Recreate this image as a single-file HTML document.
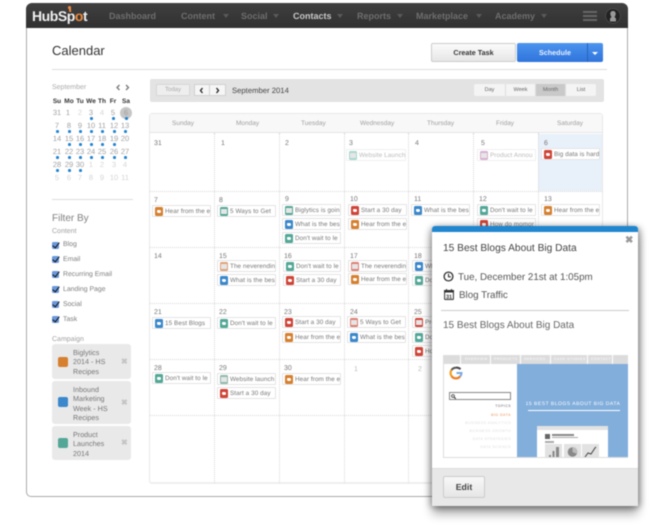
<!DOCTYPE html>
<html><head><meta charset="utf-8">
<style>
*{box-sizing:border-box}
html,body{margin:0;padding:0;width:650px;height:525px;overflow:hidden;background:#fff;font-family:"Liberation Sans",sans-serif;text-rendering:geometricPrecision}
#r{position:absolute;left:0;top:0;width:650px;height:525px;overflow:hidden;filter:blur(.5px)}
.a,.n,.c,.m,.d,.e,.t{position:absolute;white-space:nowrap}
.n{top:11px;font-size:9px;font-weight:bold;color:#6e6e6e;line-height:11px}
.c{top:14px;width:0;height:0;border:3.5px solid transparent;border-top:4px solid #5a5a5a;border-bottom:0}
.m{width:12px;text-align:center;font-size:7.5px;line-height:9px;color:#a0a0a0;margin-left:-6px}
.h{color:#333;font-weight:bold;font-size:6.5px}
.f{color:#d4d4d4}
.m.b::after{content:"";position:absolute;left:5px;top:9px;width:2.5px;height:2.5px;border-radius:50%;background:#1f83d0}
.d{font-size:7px;line-height:9px;color:#777}
.l{position:absolute;left:150px;width:453px;height:0;border-top:1px dotted #d8d8d8}
.v{position:absolute;top:133px;height:350px;width:0;border-left:1px dotted #d8d8d8}
.e{height:12px;border:1px solid #e4e4e4;background:#fff;font-size:6.3px;line-height:11px;color:#777;padding-left:12px;overflow:hidden;letter-spacing:.1px;border-radius:1px}
.e i{position:absolute;left:1.5px;top:1px;width:8.5px;height:8.5px;border-radius:1.5px;background:var(--k)}
.e i::after{content:"";position:absolute;left:2.5px;top:2.5px;width:3.5px;height:3.5px;background:#fff;border-radius:1px 2px 2px 2px}
.e i.g::after{left:1px;top:1.5px;width:6.5px;height:5px;border-radius:0;background:#e6e6e6}
.O{--k:#d67f2e}.B{--k:#3a87cb}.T{--k:#52a797}.R{--k:#cf4436}.S{--k:#dd7f72}.Y{--k:#dda37a}.P{--k:#d8b0d2}.Q{--k:#a8d8ce}
.ck{position:absolute;left:52px;width:7px;height:7px;background:#6a98dc;border-radius:1.5px}
.ck::after{content:"";position:absolute;left:1.5px;top:-1px;width:3px;height:6px;border:solid #111;border-width:0 1.5px 1.5px 0;transform:rotate(38deg)}
.cl{position:absolute;left:63px;font-size:6.9px;line-height:9px;color:#808080}
.cp{position:absolute;left:52px;width:79px;background:#e9e9e9;border-radius:3px;font-size:7.2px;line-height:9.3px;color:#777;padding:4px 0 0 21px}
.cp b{position:absolute;left:5.5px;width:10px;height:10px;border-radius:2px}
.cp u{position:absolute;left:69px;top:50%;margin-top:-5px;font-size:8px;line-height:10px;color:#c4c4c4;text-decoration:none;font-weight:bold}
.w{position:absolute;top:84px;height:12px;font-size:5.5px;line-height:12px;text-align:center;color:#666;background:#f4f4f4;border-right:1px solid #ddd}
.t{color:#fff}
</style></head><body><div id="r">

<!-- frame -->
<div class="a" style="left:26px;top:3px;width:602px;height:494px;border:1px solid #aaa;border-radius:7px 7px 5px 5px;background:#fff"></div>
<div class="a" style="left:26px;top:3px;width:602px;height:25px;background:linear-gradient(#404040,#303030);border-radius:6px 6px 0 0"></div>

<div class="a" style="left:32px;top:7px;font-size:14px;line-height:18px;font-weight:bold;color:#f0f0f0;letter-spacing:-.45px">HubSp<span style="color:#f08a3c">o</span>t</div>
<div class="a" style="left:69px;top:7px;width:1.500px;height:5px;background:#f08a3c;transform:rotate(-5deg)"></div>
<div class="a" style="left:67.500px;top:6px;width:3.500px;height:3px;border-radius:50%;background:#f08a3c"></div>
<div class="n" style="left:109px">Dashboard</div>
<div class="n" style="left:181px">Content</div><div class="c" style="left:223px"></div>
<div class="n" style="left:241px">Social</div><div class="c" style="left:273px"></div>
<div class="n" style="left:293px;color:#c9c9c9">Contacts</div><div class="c" style="left:337px"></div>
<div class="n" style="left:357px">Reports</div><div class="c" style="left:397px"></div>
<div class="n" style="left:416px">Marketplace</div><div class="c" style="left:476px"></div>
<div class="n" style="left:495px">Academy</div><div class="c" style="left:541px"></div>
<div class="a" style="left:583px;top:11px;width:14px;height:2px;background:#666"></div>
<div class="a" style="left:583px;top:15px;width:14px;height:2px;background:#666"></div>
<div class="a" style="left:583px;top:19px;width:14px;height:2px;background:#666"></div>
<svg class="a" style="left:605px;top:8px" width="16" height="16" viewBox="0 0 16 16"><circle cx="8" cy="8" r="7.3" fill="#222" stroke="#555" stroke-width=".6"/><path d="M5 13.500V11c0-1 1-1.300 1.500-2C5.800 8 5.300 7 5.300 5.800 5.300 4 6.400 3 8 3s2.700 1 2.700 2.800C10.700 7 10.200 8 9.500 9c.5.700 1.500 1 1.500 2v2.500z" fill="#999"/></svg>

<!-- page head -->
<div class="a" style="left:52px;top:42px;font-size:13px;line-height:18px;color:#333">Calendar</div>
<div class="a" style="left:52px;top:69px;width:555px;height:1px;background:#ddd"></div>
<div class="a" style="left:431px;top:43px;width:85px;height:19px;background:linear-gradient(#fbfbfb,#e6e6e6);border:1px solid #ccc;border-radius:2px;font-size:7.2px;font-weight:bold;line-height:17px;text-align:center;color:#333">Create Task</div>
<div class="a" style="left:517px;top:43px;width:86px;height:19px;background:linear-gradient(#4c94ee,#2f74dc);border-radius:2px;font-size:7.2px;font-weight:bold;line-height:19px;color:#e8f0ff;padding-left:22px">Schedule</div>
<div class="a" style="left:587px;top:43px;width:1px;height:19px;background:#2a62b8"></div>
<div class="a" style="left:592px;top:52px;width:0;height:0;border:3px solid transparent;border-top:3.500px solid #fff;border-bottom:0"></div>

<!-- mini calendar -->
<div class="a" style="left:52px;top:83px;font-size:7px;line-height:9px;color:#aaa">September</div>
<svg class="a" style="left:116px;top:84px" width="14" height="7" viewBox="0 0 14 7"><path d="M3.500 1L1 3.500 3.500 6M10 1l2.500 2.500L10 6" fill="none" stroke="#777" stroke-width="1.300"/></svg>
<div class="a" style="left:120px;top:107px;width:12px;height:12px;border-radius:50%;background:#c6c6c6"></div>
<div class="m h" style="left:57px;top:97px">Su</div><div class="m h" style="left:69px;top:97px">Mo</div><div class="m h" style="left:80px;top:97px">Tu</div><div class="m h" style="left:91px;top:97px">We</div><div class="m h" style="left:102px;top:97px">Th</div><div class="m h" style="left:113px;top:97px">Fr</div><div class="m h" style="left:126px;top:97px">Sa</div>

<div class="m" style="left:57px;top:108px">31</div><div class="m" style="left:68px;top:108px">1</div><div class="m f" style="left:80px;top:108px">2</div><div class="m b" style="left:91px;top:108px">3</div><div class="m f" style="left:102px;top:108px">4</div><div class="m b" style="left:113px;top:108px">5</div><div class="m b" style="left:126px;top:108px">6</div>
<div class="m b" style="left:57px;top:121px">7</div><div class="m b" style="left:69px;top:121px">8</div><div class="m b" style="left:80px;top:121px">9</div><div class="m b" style="left:91px;top:121px">10</div><div class="m b" style="left:102px;top:121px">11</div><div class="m b" style="left:114px;top:121px">12</div><div class="m b" style="left:125px;top:121px">13</div>
<div class="m" style="left:57px;top:134px">14</div><div class="m b" style="left:69px;top:134px">15</div><div class="m b" style="left:80px;top:134px">16</div><div class="m b" style="left:91px;top:134px">17</div><div class="m b" style="left:102px;top:134px">18</div><div class="m b" style="left:114px;top:134px">19</div><div class="m" style="left:125px;top:134px">20</div>
<div class="m b" style="left:57px;top:147px">21</div><div class="m b" style="left:69px;top:147px">22</div><div class="m b" style="left:80px;top:147px">23</div><div class="m b" style="left:91px;top:147px">24</div><div class="m b" style="left:102px;top:147px">25</div><div class="m b" style="left:114px;top:147px">26</div><div class="m b" style="left:125px;top:147px">27</div>
<div class="m b" style="left:57px;top:160px">28</div><div class="m b" style="left:69px;top:160px">29</div><div class="m b" style="left:80px;top:160px">30</div><div class="m f" style="left:91px;top:160px">1</div><div class="m f" style="left:102px;top:160px">2</div><div class="m f" style="left:114px;top:160px">3</div><div class="m f" style="left:125px;top:160px">4</div>
<div class="m f" style="left:57px;top:173px">5</div><div class="m f" style="left:69px;top:173px">6</div><div class="m f" style="left:80px;top:173px">7</div><div class="m f" style="left:91px;top:173px">8</div><div class="m f" style="left:102px;top:173px">9</div><div class="m f" style="left:114px;top:173px">10</div><div class="m f" style="left:125px;top:173px">11</div>

<div class="a" style="left:52px;top:199px;width:81px;height:1px;background:#ddd"></div>

<!-- filters -->
<div class="a" style="left:52px;top:212px;font-size:10px;line-height:13px;color:#808080">Filter By</div>
<div class="a" style="left:52px;top:227px;font-size:7px;line-height:9px;color:#a0a0a0">Content</div>
<div class="ck" style="top:241.500px"></div><div class="cl" style="top:240px">Blog</div>
<div class="ck" style="top:256px"></div><div class="cl" style="top:255px">Email</div>
<div class="ck" style="top:271px"></div><div class="cl" style="top:270px">Recurring Email</div>
<div class="ck" style="top:286px"></div><div class="cl" style="top:285px">Landing Page</div>
<div class="ck" style="top:301px"></div><div class="cl" style="top:300px">Social</div>
<div class="ck" style="top:316px"></div><div class="cl" style="top:315px">Task</div>
<div class="a" style="left:52px;top:335px;font-size:7px;line-height:9px;color:#a0a0a0">Campaign</div>
<div class="cp" style="top:344px;height:35px"><b style="top:12.500px;background:#d67f2e"></b>Biglytics<br>2014 - HS<br>Recipes<u>✖</u></div>
<div class="cp" style="top:381px;height:43px"><b style="top:16px;background:#3a87cb"></b>Inbound<br>Marketing<br>Week - HS<br>Recipes<u>✖</u></div>
<div class="cp" style="top:426px;height:34px"><b style="top:12px;background:#52a797"></b>Product<br>Launches<br>2014<u>✖</u></div>

<!-- toolbar -->
<div class="a" style="left:150px;top:79px;width:454px;height:23px;background:#e3e3e3;border-radius:2px"></div>
<div class="a" style="left:156px;top:84px;width:34px;height:12px;background:#eee;border:1px solid #d8d8d8;font-size:6px;line-height:11px;text-align:center;color:#aaa">Today</div>
<div class="a" style="left:194px;top:84px;width:32px;height:12px;background:#f6f6f6;border:1px solid #d0d0d0"></div>
<div class="a" style="left:209px;top:84px;width:1px;height:12px;background:#d0d0d0"></div>
<svg class="a" style="left:199px;top:87px" width="22" height="7" viewBox="0 0 22 7"><path d="M3.500 1L1.500 3.500 3.500 6M17.500 1l2 2.500-2 2.500" fill="none" stroke="#222" stroke-width="1.300"/></svg>
<div class="a" style="left:232px;top:85px;font-size:7.700px;line-height:11px;color:#444">September 2014</div>
<div class="w" style="left:474px;width:32px;border-radius:2px 0 0 2px">Day</div>
<div class="w" style="left:506px;width:30px">Week</div>
<div class="w" style="left:536px;width:30px;background:#c9c9c9">Month</div>
<div class="w" style="left:566px;width:30px;border-radius:0 2px 2px 0;border-right:0">List</div>

<!-- calendar grid -->
<div class="a" style="left:149px;top:113px;width:454px;height:371px;border:1px solid #e8e8e8;border-bottom:2px solid #eee;border-radius:3px"></div>
<div class="a" style="left:150px;top:114px;width:452px;height:19px;background:#f8f8f8;border-bottom:1px solid #e4e4e4"></div>
<div class="a" style="left:538px;top:134px;width:64px;height:57px;background:#e8f0fa"></div>

<div class="a" style="left:172px;top:119px;font-size:6.5px;line-height:9px;color:#a0a0a0">Sunday</div>
<div class="a" style="left:236px;top:119px;font-size:6.5px;line-height:9px;color:#a0a0a0">Monday</div>
<div class="a" style="left:301px;top:119px;font-size:6.5px;line-height:9px;color:#a0a0a0">Tuesday</div>
<div class="a" style="left:360px;top:119px;font-size:6.5px;line-height:9px;color:#a0a0a0">Wednesday</div>
<div class="a" style="left:427px;top:119px;font-size:6.5px;line-height:9px;color:#a0a0a0">Thursday</div>
<div class="a" style="left:496px;top:119px;font-size:6.5px;line-height:9px;color:#a0a0a0">Friday</div>
<div class="a" style="left:557px;top:119px;font-size:6.5px;line-height:9px;color:#a0a0a0">Saturday</div>

<div class="v" style="left:214px"></div><div class="v" style="left:279px"></div><div class="v" style="left:344px"></div><div class="v" style="left:408px"></div><div class="v" style="left:473px"></div><div class="v" style="left:538px"></div>
<div class="l" style="top:191px"></div><div class="l" style="top:247px"></div><div class="l" style="top:303px"></div><div class="l" style="top:359px"></div><div class="l" style="top:415px"></div>

<div class="d" style="left:154px;top:139px">31</div><div class="d" style="left:221px;top:139px">1</div><div class="d" style="left:285px;top:139px">2</div><div class="d" style="left:349px;top:139px">3</div><div class="d" style="left:415px;top:139px">4</div><div class="d" style="left:481px;top:139px">5</div><div class="d" style="left:544px;top:139px">6</div>
<div class="d" style="left:154px;top:196px">7</div><div class="d" style="left:219px;top:196px">8</div><div class="d" style="left:285px;top:195px">9</div><div class="d" style="left:350px;top:195px">10</div><div class="d" style="left:414px;top:195px">11</div><div class="d" style="left:479px;top:195px">12</div><div class="d" style="left:544px;top:195px">13</div>
<div class="d" style="left:154px;top:252px">14</div><div class="d" style="left:219px;top:252px">15</div><div class="d" style="left:284px;top:252px">16</div><div class="d" style="left:350px;top:252px">17</div><div class="d" style="left:414px;top:252px">18</div>
<div class="d" style="left:154px;top:308px">21</div><div class="d" style="left:219px;top:308px">22</div><div class="d" style="left:284px;top:308px">23</div><div class="d" style="left:350px;top:308px">24</div><div class="d" style="left:414px;top:308px">25</div>
<div class="d" style="left:154px;top:364px">28</div><div class="d" style="left:219px;top:364px">29</div><div class="d" style="left:284px;top:364px">30</div><div class="d" style="left:354px;top:365px;color:#bbb">1</div><div class="d" style="left:418px;top:365px;color:#bbb">2</div>

<!-- events -->
<div class="e Q" style="left:346px;top:149px;width:60px;color:#bbb;border-color:#f0f0f0"><i class="g"></i>Website Launch</div>
<div class="e P" style="left:477px;top:149px;width:59px;color:#bbb;border-color:#f0f0f0"><i class="g"></i>Product Annou</div>
<div class="e R" style="left:541px;top:148px;width:59px"><i></i>Big data is hard</div>

<div class="e O" style="left:152px;top:205px;width:59px"><i></i>Hear from the e</div>
<div class="e T" style="left:217px;top:205px;width:59px"><i class="g"></i>5 Ways to Get</div>
<div class="e T" style="left:282px;top:204px;width:59px"><i class="g"></i>Biglytics is goin</div>
<div class="e B" style="left:282px;top:218px;width:59px"><i></i>What is the bes</div>
<div class="e T" style="left:282px;top:232px;width:59px"><i></i>Don't wait to le</div>
<div class="e R" style="left:348px;top:204px;width:59px"><i></i>Start a 30 day</div>
<div class="e O" style="left:348px;top:218px;width:59px"><i></i>Hear from the e</div>
<div class="e B" style="left:411px;top:204px;width:59px"><i></i>What is the bes</div>
<div class="e T" style="left:477px;top:204px;width:59px"><i></i>Don't wait to le</div>
<div class="e R" style="left:477px;top:218px;width:59px"><i></i>How do momor</div>
<div class="e O" style="left:541px;top:204px;width:59px"><i></i>Hear from the e</div>

<div class="e Y" style="left:217px;top:260px;width:59px"><i class="g"></i>The neverendin</div>
<div class="e B" style="left:217px;top:274px;width:59px"><i></i>What is the bes</div>
<div class="e T" style="left:283px;top:260px;width:58px"><i></i>Don't wait to le</div>
<div class="e R" style="left:283px;top:274px;width:58px"><i></i>Start a 30 day</div>
<div class="e S" style="left:348px;top:260px;width:59px"><i class="g"></i>The neverendin</div>
<div class="e O" style="left:348px;top:273px;width:59px"><i></i>Hear from the e</div>
<div class="e B" style="left:412px;top:260px;width:59px"><i></i>What is the bes</div>
<div class="e T" style="left:412px;top:274px;width:59px"><i></i>Don't wait to le</div>

<div class="e B" style="left:152px;top:317px;width:59px"><i></i>15 Best Blogs</div>
<div class="e T" style="left:217px;top:317px;width:59px"><i></i>Don't wait to le</div>
<div class="e R" style="left:282px;top:316px;width:59px"><i></i>Start a 30 day</div>
<div class="e O" style="left:282px;top:331px;width:59px"><i></i>Hear from the e</div>
<div class="e S" style="left:347px;top:316px;width:59px"><i class="g"></i>5 Ways to Get</div>
<div class="e B" style="left:347px;top:331px;width:59px"><i></i>What is the bes</div>
<div class="e R" style="left:412px;top:316px;width:59px"><i class="g"></i>Product Annou</div>
<div class="e T" style="left:412px;top:331px;width:59px"><i></i>Don't wait to le</div>
<div class="e R" style="left:412px;top:345px;width:59px"><i></i>How do momor</div>

<div class="e T" style="left:152px;top:372px;width:59px"><i></i>Don't wait to le</div>
<div class="e T" style="left:217px;top:373px;width:59px;--k:#8fb8ae"><i class="g"></i>Website launch</div>
<div class="e R" style="left:217px;top:387px;width:59px"><i></i>Start a 30 day</div>
<div class="e O" style="left:282px;top:373px;width:59px"><i></i>Hear from the e</div>

<!-- popup -->
<div class="a" style="left:432px;top:226px;width:206px;height:280px;background:#fff;border-radius:3px 3px 2px 2px;box-shadow:0 8px 10px 0 rgba(0,0,0,.32),-2px 1px 7px rgba(0,0,0,.28),3px 1px 7px rgba(0,0,0,.28);z-index:5">
 <div class="a" style="left:0;top:0;width:206px;height:6px;background:#1f86cf;border-radius:3px 3px 0 0"></div>
 <div class="a" style="left:11px;top:16px;font-size:10.2px;line-height:14px;color:#444">15 Best Blogs About Big Data</div>
 <div class="a" style="left:193px;top:9px;font-size:10px;line-height:12px;color:#999;font-weight:bold">✖</div>
 <svg class="a" style="left:11px;top:45px" width="11" height="11" viewBox="0 0 11 11"><circle cx="5.500" cy="5.500" r="4.400" fill="none" stroke="#333" stroke-width="1.300"/><path d="M5.500 2.800v3h2.400" fill="none" stroke="#333" stroke-width="1.100"/></svg>
 <div class="a" style="left:26px;top:45px;font-size:9.800px;line-height:14px;color:#555">Tue, December 21st at 1:05pm</div>
 <svg class="a" style="left:12px;top:63px" width="10" height="11" viewBox="0 0 10 11"><rect x=".6" y="1.500" width="8.800" height="9" rx=".8" fill="#fff" stroke="#333" stroke-width="1"/><rect x="0" y="1" width="10" height="2.500" fill="#333"/><path d="M2.500 0v2M7.500 0v2" stroke="#333"/><text x="5" y="9.300" font-size="5.500" font-weight="bold" font-family="Liberation Sans" text-anchor="middle" fill="#333">31</text></svg>
 <div class="a" style="left:27px;top:63px;font-size:9.800px;line-height:14px;color:#555">Blog Traffic</div>
 <div class="a" style="left:9px;top:84px;width:188px;height:1px;background:#ccc"></div>
 <div class="a" style="left:11px;top:93px;font-size:10px;line-height:14px;color:#666">15 Best Blogs About Big Data</div>

 <!-- thumbnail -->
 <div class="a" style="left:11px;top:129px;width:185px;height:103px;background:#fff;overflow:hidden;border-left:1px solid #ddd;border-bottom:1px solid #ddd">
  <div class="a" style="left:0;top:0;width:185px;height:9px;background:#dcdcdc"></div>
  <div class="a" style="left:16px;top:0;width:1px;height:9px;background:#fff"></div><div class="a" style="left:46px;top:0;width:1px;height:9px;background:#fff"></div><div class="a" style="left:76px;top:0;width:1px;height:9px;background:#fff"></div><div class="a" style="left:106px;top:0;width:1px;height:9px;background:#fff"></div><div class="a" style="left:143px;top:0;width:1px;height:9px;background:#fff"></div><div class="a" style="left:168px;top:0;width:1px;height:9px;background:#fff"></div>
  <div class="t" style="left:21px;top:2px;font-size:3.500px;line-height:5px;letter-spacing:.5px">OVERVIEW</div>
  <div class="t" style="left:50px;top:2px;font-size:3.500px;line-height:5px;letter-spacing:.5px">PRODUCTS</div>
  <div class="t" style="left:80px;top:2px;font-size:3.500px;line-height:5px;letter-spacing:.5px">SERVICES</div>
  <div class="t" style="left:110px;top:2px;font-size:3.500px;line-height:5px;letter-spacing:.5px">CASE STUDIES</div>
  <div class="t" style="left:147px;top:2px;font-size:3.500px;line-height:5px;letter-spacing:.5px">CONTACT</div>
  <div class="a" style="left:73px;top:9px;width:112px;height:94px;background:#82aedc"></div>
  <svg class="a" style="left:5px;top:11px" width="14" height="14" viewBox="0 0 14 14"><path d="M11.500 3.200A5.300 5.300 0 0 0 7 1.700" fill="none" stroke="#444" stroke-width="2"/><path d="M7 1.700A5.300 5.300 0 0 0 2.500 4" fill="none" stroke="#555" stroke-width="2"/><path d="M2.500 4A5.500 5.500 0 0 0 2.500 10" fill="none" stroke="#f0a020" stroke-width="2.200"/><path d="M2.500 10A5.300 5.300 0 0 0 11 10.500" fill="none" stroke="#ef7d22" stroke-width="2.200"/><path d="M11 10.500A5 5 0 0 0 12.500 7H7.500" fill="none" stroke="#7ba8e0" stroke-width="2"/></svg>
  <div class="a" style="left:5px;top:37px;width:62px;height:8px;border:1px solid #888"></div>
  <svg class="a" style="left:7px;top:39px" width="5" height="5" viewBox="0 0 5 5"><circle cx="2" cy="2" r="1.400" fill="none" stroke="#333" stroke-width=".8"/><path d="M3 3l1.800 1.800" stroke="#333"/></svg>
  <div class="a" style="left:0;top:48px;width:67px;text-align:right;font-size:3.600px;line-height:6px;color:#999;letter-spacing:.4px;font-weight:bold">TOPICS</div>
  <div class="a" style="left:0;top:56px;width:67px;text-align:right;font-size:3.600px;line-height:8px;color:#f3b48a;letter-spacing:.4px;font-weight:bold">BIG DATA</div>
  <div class="a" style="left:0;top:64px;width:67px;text-align:right;font-size:3.600px;line-height:8px;color:#dedede;letter-spacing:.4px">BUSINESS ANALYTICS<br>BUSINESS GROWTH<br>DATA STRATEGIES<br>DATA SCIENCE</div>
  <div class="t" style="left:73px;top:46px;width:112px;text-align:center;font-size:5px;line-height:7px;letter-spacing:.5px">15 BEST BLOGS ABOUT BIG DATA</div>
  <div class="a" style="left:84px;top:55px;width:92px;height:1px;background:#fff"></div>
  <div class="a" style="left:93px;top:71px;width:71px;height:40px;background:#fff"></div>
  <div class="a" style="left:93px;top:71px;width:71px;height:4px;background:#e2e2e2"></div>
  <div class="a" style="left:101px;top:79px;width:5px;height:5px;background:#666"></div>
  <div class="a" style="left:108px;top:79px;width:22px;height:1.500px;background:#888"></div>
  <div class="a" style="left:108px;top:82px;width:26px;height:1px;background:#aaa"></div>
  <div class="a" style="left:101px;top:86px;width:9px;height:1.500px;background:#aaa"></div>
  <div class="a" style="left:101px;top:89px;width:17px;height:14px;background:#e2e2e2"></div>
  <div class="a" style="left:120px;top:89px;width:17px;height:14px;background:#e2e2e2"></div>
  <div class="a" style="left:138px;top:89px;width:17px;height:14px;background:#e2e2e2"></div>
  <svg class="a" style="left:101px;top:89px" width="55" height="14" viewBox="0 0 55 14"><path d="M4 14v-3h2v3zM7.500 14V7h2v7zM11 14V3h3v11z" fill="#888"/><circle cx="27.500" cy="8" r="4.800" fill="#888"/><path d="M27.500 8V3a5 5 0 0 1 4.500 7z" fill="#bbb"/><path d="M40 13l3-4 3 1 4-6 1-1" fill="none" stroke="#444" stroke-width="1"/></svg>
 </div>

 <!-- footer -->
 <div class="a" style="left:0;top:242px;width:206px;height:38px;background:#e8e8e8;border-top:1px solid #ddd"></div>
 <div class="a" style="left:11px;top:250px;width:42px;height:22px;background:linear-gradient(#f8f8f8,#e6e6e6);border:1px solid #ccc;border-radius:2px;font-size:8.800px;font-weight:bold;line-height:20px;text-align:center;color:#444">Edit</div>
</div>
</div></body></html>
